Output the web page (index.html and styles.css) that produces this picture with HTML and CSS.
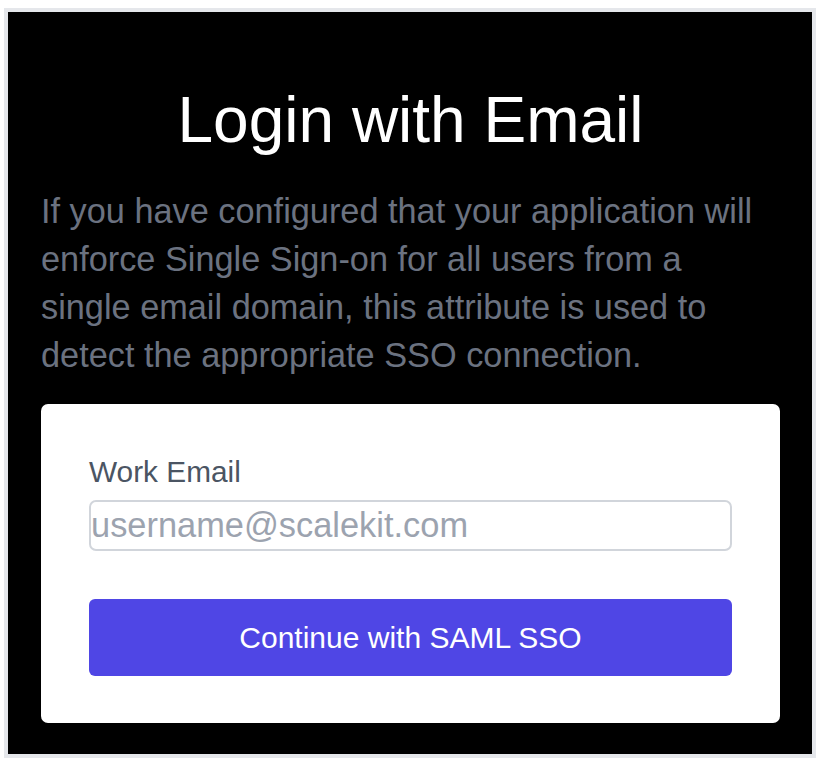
FILE: index.html
```html
<!DOCTYPE html>
<html lang="en">
<head>
<meta charset="utf-8">
<title>Login with Email</title>
<link rel="stylesheet" href="styles.css">
</head>
<body>
  <div class="frame">
    <h1 class="title">Login with Email</h1>
    <p class="intro">If you have configured that your application will enforce Single Sign-on for all users from a single email domain, this attribute is used to detect the appropriate SSO connection.</p>
    <form class="card">
      <label class="label" for="email">Work Email</label>
      <input class="input" id="email" type="email" placeholder="username@scalekit.com">
      <button class="button" type="button">Continue with SAML SSO</button>
    </form>
  </div>
</body>
</html>
```

FILE: styles.css
```css
html, body {
  margin: 0;
  padding: 0;
  background: #ffffff;
}

body {
  font-family: "Liberation Sans", Arial, Helvetica, sans-serif;
}

.frame {
  box-sizing: border-box;
  width: 812px;
  margin: 8px 0 0 4px;
  border: 4px solid #e5e7eb;
  background: #000000;
  padding: 72px 32px 31px 33px;
}

.title {
  margin: 0;
  font-size: 64px;
  line-height: 72px;
  font-weight: 400;
  color: #ffffff;
  text-align: center;
}

.intro {
  margin: 31px 0 0;
  font-size: 34.3px;
  line-height: 48px;
  color: #6b7280;
}

.card {
  margin-top: 25px;
  background: #ffffff;
  border-radius: 7px;
  padding: 48px 48px 47px;
  display: flex;
  flex-direction: column;
}

.label {
  font-size: 29.8px;
  line-height: 40px;
  color: #4b5563;
}

.input {
  box-sizing: border-box;
  margin-top: 8px;
  height: 51px;
  width: 100%;
  border: 2px solid #d1d5db;
  border-radius: 7px;
  padding: 0;
  font-family: "Liberation Sans", Arial, Helvetica, sans-serif;
  font-size: 34.4px;
  color: #111827;
  background: #ffffff;
  outline: none;
}

.input::placeholder {
  color: #9ca3af;
  opacity: 1;
}

.button {
  margin-top: 48px;
  height: 77px;
  width: 100%;
  border: 0;
  border-radius: 6px;
  background: #4f46e5;
  color: #ffffff;
  font-family: "Liberation Sans", Arial, Helvetica, sans-serif;
  font-size: 30px;
  cursor: pointer;
}
```
